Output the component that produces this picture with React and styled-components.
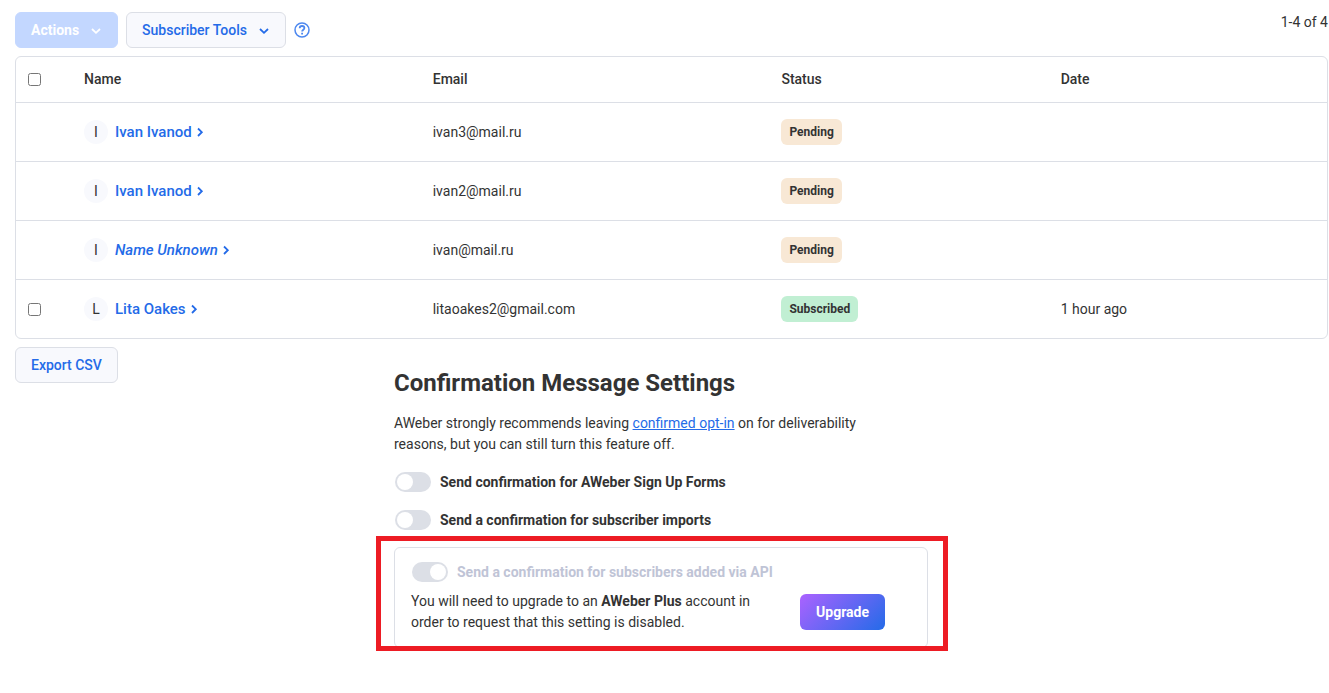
import React from "react";
import styled, { createGlobalStyle, css } from "styled-components";

const color = {
  text: "#333333",
  link: "#246be8",
  line: "#dcdfe6",
  soft: "#f8f9fd",
  muted: "#bfc4d6",
};

const GlobalStyle = createGlobalStyle`
  *, *::before, *::after { box-sizing: border-box; }
  body {
    margin: 0;
    background: #ffffff;
    color: ${color.text};
    font-family: Roboto, "Liberation Sans", sans-serif;
    font-size: 14px;
    line-height: 21px;
  }
  button, input { font-family: inherit; }
`;

const Page = styled.main`
  padding: 12px 1px 24px 15px;
`;

const Toolbar = styled.div`
  display: flex;
  align-items: center;
  gap: 8px;
  margin-bottom: 8px;
`;

const buttonLooks = {
  secondary: css`
    background: ${color.soft};
    border-color: ${color.line};
    color: ${color.link};
  `,
  disabled: css`
    background: #c3d7ff;
    border-color: #c3d7ff;
    color: #ffffff;
  `,
  upgrade: css`
    background: linear-gradient(135deg, #ab62ff, #246be8) border-box;
    border-color: transparent;
    color: #ffffff;
  `,
};

const Button = styled.button`
  display: inline-flex;
  align-items: center;
  justify-content: center;
  gap: 11px;
  height: 36px;
  padding: 0 15px;
  border: 1px solid;
  border-radius: 6px;
  font-size: 14px;
  font-weight: ${(p) => (p.$look === "secondary" ? 500 : 700)};
  line-height: 20px;
  white-space: nowrap;
  cursor: pointer;
  ${(p) => buttonLooks[p.$look]}
`;

const HelpButton = styled.button`
  display: inline-flex;
  padding: 0;
  border: 0;
  background: none;
  color: #4d88ef;
  cursor: pointer;
`;

const Count = styled.span`
  align-self: flex-start;
  margin-left: auto;
  line-height: 20px;
`;

const TableFrame = styled.div`
  border: 1px solid ${color.line};
  border-radius: 6px;
  overflow: hidden;
`;

const Table = styled.table`
  width: 100%;
  table-layout: fixed;
  border-collapse: separate;
  border-spacing: 0;
  text-align: left;
`;

const Column = styled.col`
  width: ${(p) => p.$width};
`;

const HeadCell = styled.th`
  height: 45px;
  padding: 0 12px;
  font-weight: 500;
`;

const Cell = styled.td`
  height: 59px;
  padding: 0 12px;
  border-top: 1px solid ${color.line};
`;

const RowCheckbox = styled.input`
  display: block;
  width: 13px;
  height: 13px;
  margin: 0;
`;

const Person = styled.div`
  display: flex;
  align-items: center;
  gap: 7px;
`;

const Avatar = styled.span`
  display: flex;
  align-items: center;
  justify-content: center;
  width: 24px;
  height: 24px;
  border-radius: 50%;
  background: ${color.soft};
`;

const PersonLink = styled.a`
  display: inline-flex;
  align-items: center;
  gap: 4px;
  color: ${color.link};
  font-size: 15px;
  font-weight: 500;
  line-height: 20px;
  font-style: ${(p) => (p.$unknown ? "italic" : "normal")};
  text-decoration: none;
`;

const Badge = styled.span`
  display: inline-block;
  padding: 3px 8px;
  border-radius: 6px;
  background: ${(p) => (p.$status === "Subscribed" ? "#c1efd3" : "#f8e8d5")};
  font-size: 12px;
  font-weight: 700;
  line-height: 20px;
  vertical-align: middle;
`;

const Lower = styled.div`
  display: grid;
  grid-template-columns: 1fr minmax(0, 534px) 1fr;
  justify-items: start;
  align-items: start;
  padding: 8px 21px 0 0;
`;

const Settings = styled.section`
  width: 100%;
  padding-top: 20px;
`;

const Heading = styled.h2`
  margin: 0 0 14px;
  font-size: 24px;
  font-weight: 700;
  line-height: 32px;
`;

const Paragraph = styled.p`
  max-width: 500px;
  margin: 0;
`;

const InlineLink = styled.a`
  color: ${color.link};
  text-decoration: underline;
`;

const Options = styled.div`
  display: grid;
  gap: 18px;
  margin: 17px 0;
`;

const OptionLabel = styled.label`
  display: flex;
  align-items: center;
  gap: 9px;
  padding-left: 1px;
  color: ${(p) => (p.$muted ? color.muted : color.text)};
  font-weight: 700;
  line-height: 20px;
`;

const Switch = styled.input.attrs({ type: "checkbox", role: "switch" })`
  appearance: none;
  display: flex;
  align-items: center;
  flex: none;
  width: 36px;
  height: 20px;
  margin: 0;
  padding: 0 2px;
  border-radius: 10px;
  background: ${color.line};

  &::before {
    content: "";
    width: 16px;
    height: 16px;
    border-radius: 50%;
    background: #ffffff;
  }

  &:checked::before {
    margin-left: auto;
  }
`;

const UpgradeCard = styled.div`
  position: relative;
  padding: 14px 42px 14px 16px;
  border: 1px solid ${color.line};
  border-radius: 6px;
`;

const Highlight = styled.div`
  position: absolute;
  inset: -12px -21px -4px -19px;
  border: 5px solid #ed1c24;
  pointer-events: none;
`;

const UpgradeRow = styled.div`
  display: flex;
  align-items: center;
  justify-content: space-between;
  gap: 24px;
  padding-top: 9px;
`;

const Chevron = ({ right }) => (
  <svg width={right ? 8 : 12} height="12" viewBox={right ? "0 0 8 12" : "0 0 12 12"} fill="none" stroke="currentColor" strokeWidth="1.8" aria-hidden="true">
    <path d={right ? "M2 2.5 L5.8 6.2 L2 10" : "M2 5 L6 8.8 L10 5"} />
  </svg>
);

const HelpIcon = () => (
  <svg width="16" height="16" viewBox="0 0 16 16" fill="none" stroke="currentColor" aria-hidden="true">
    <circle cx="8" cy="8" r="7" strokeWidth="1.5" />
    <path d="M5.7 6.3 C5.7 4.8 6.7 4 8 4 C9.4 4 10.4 4.8 10.4 6 C10.4 7.7 8.1 7.7 8.1 9.6" strokeWidth="1.8" />
    <path d="M7.2 11.7 H9" strokeWidth="1.8" />
  </svg>
);

const subscribers = [
  { name: "Ivan Ivanod", email: "ivan3@mail.ru", status: "Pending" },
  { name: "Ivan Ivanod", email: "ivan2@mail.ru", status: "Pending" },
  { email: "ivan@mail.ru", status: "Pending" },
  { name: "Lita Oakes", email: "litaoakes2@gmail.com", status: "Subscribed", date: "1 hour ago" },
];

const SubscriberRow = ({ name, email, status, date }) => (
  <tr>
    <Cell>
      {status === "Subscribed" && <RowCheckbox type="checkbox" aria-label={`Select ${name}`} />}
    </Cell>
    <Cell>
      <Person>
        <Avatar>{(name || email)[0].toUpperCase()}</Avatar>
        <PersonLink href="#subscriber" $unknown={!name}>
          {name || "Name Unknown"}
          <Chevron right />
        </PersonLink>
      </Person>
    </Cell>
    <Cell>{email}</Cell>
    <Cell>
      <Badge $status={status}>{status}</Badge>
    </Cell>
    <Cell>{date}</Cell>
  </tr>
);

export default function App() {
  return (
    <>
      <GlobalStyle />
      <Page>
        <Toolbar>
          <Button type="button" $look="disabled" disabled>
            Actions
            <Chevron />
          </Button>
          <Button type="button" $look="secondary">
            Subscriber Tools
            <Chevron />
          </Button>
          <HelpButton type="button" aria-label="Help">
            <HelpIcon />
          </HelpButton>
          <Count>1-4 of 4</Count>
        </Toolbar>

        <TableFrame>
          <Table>
            <colgroup>
              <Column $width="56px" />
              <Column $width="26.6%" />
              <Column $width="26.6%" />
              <Column $width="21.3%" />
              <Column $width="auto" />
            </colgroup>
            <thead>
              <tr>
                <HeadCell>
                  <RowCheckbox type="checkbox" aria-label="Select all subscribers" />
                </HeadCell>
                <HeadCell>Name</HeadCell>
                <HeadCell>Email</HeadCell>
                <HeadCell>Status</HeadCell>
                <HeadCell>Date</HeadCell>
              </tr>
            </thead>
            <tbody>
              {subscribers.map((s) => (
                <SubscriberRow key={s.email} {...s} />
              ))}
            </tbody>
          </Table>
        </TableFrame>

        <Lower>
          <Button type="button" $look="secondary">Export CSV</Button>
          <Settings>
            <Heading>Confirmation Message Settings</Heading>
            <Paragraph>
              AWeber strongly recommends leaving <InlineLink href="#opt-in">confirmed opt-in</InlineLink> on for
              deliverability reasons, but you can still turn this feature off.
            </Paragraph>
            <Options>
              <OptionLabel>
                <Switch />
                Send confirmation for AWeber Sign Up Forms
              </OptionLabel>
              <OptionLabel>
                <Switch />
                Send a confirmation for subscriber imports
              </OptionLabel>
            </Options>
            <UpgradeCard>
              <OptionLabel $muted>
                <Switch defaultChecked disabled />
                Send a confirmation for subscribers added via API
              </OptionLabel>
              <UpgradeRow>
                <Paragraph>
                  You will need to upgrade to an <strong>AWeber Plus</strong> account in order to request that this
                  setting is disabled.
                </Paragraph>
                <Button type="button" $look="upgrade">Upgrade</Button>
              </UpgradeRow>
              <Highlight />
            </UpgradeCard>
          </Settings>
        </Lower>
      </Page>
    </>
  );
}
